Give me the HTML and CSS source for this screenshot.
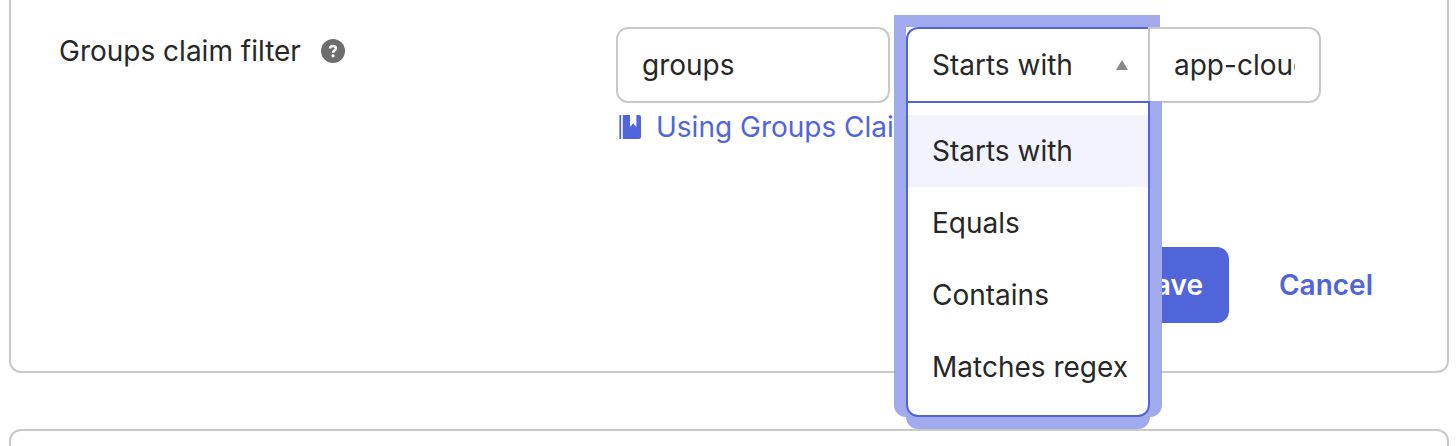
FILE: index.html
```html
<!DOCTYPE html>
<html lang="en">
<head>
  <meta charset="UTF-8" />
  <meta name="viewport" content="width=device-width, initial-scale=1.0" />
  <title>Groups claim filter</title>
  <link rel="stylesheet" href="styles.css">
</head>
<body>
  <form class="card card-main">
    <div class="form-row">
      <div class="row-label">
        <label for="claimName">Groups claim filter</label>
        <svg class="help-icon" viewBox="0 0 24 24" role="img" aria-label="Help">
          <circle cx="12" cy="12" r="12" fill="#6e6e6e" />
          <path d="M9.1 9.4C9.1 7.9 10.3 7.1 12 7.1s2.9.8 2.9 2.3c0 2-2.9 2-2.9 4.3" fill="none" stroke="#fff" stroke-width="2.5" />
          <circle cx="12" cy="16.8" r="1.6" fill="#fff" />
        </svg>
      </div>

      <div>
        <div class="fields">
          <input type="text" id="claimName" class="text-box claim-name" value="groups" />

          <div class="filter-group">
            <div class="filter-select">
              <select id="filterType" aria-label="Filter type">
                <option>Starts with</option>
                <option>Equals</option>
                <option>Contains</option>
                <option>Matches regex</option>
              </select>
              <svg class="arrow" viewBox="0 0 12 10" aria-hidden="true">
                <path d="M6 0l6 10H0z" fill="#888" />
              </svg>
              <ul class="menu" role="listbox" aria-label="Filter type">
                <li class="active" role="option" aria-selected="true">Starts with</li>
                <li role="option">Equals</li>
                <li role="option">Contains</li>
                <li role="option">Matches regex</li>
              </ul>
            </div>
            <input type="text" class="text-box filter-value" aria-label="Filter value" value="app-cloud" />
          </div>
        </div>

        <a class="doc-link" href="#">
          <svg class="book-icon" viewBox="0 0 22 24" aria-hidden="true">
            <path d="M.4 0h1.8v24H.4zM3.8 0H11v12l3.2-3.8 3.2 3.8V0H20a2 2 0 0 1 2 2v20a2 2 0 0 1-2 2H3.8z" fill="#5065da" />
          </svg>
          Using Groups Claim
        </a>
      </div>
    </div>

    <div class="actions">
      <button type="submit" class="btn btn-primary">Save</button>
      <button type="button" class="btn">Cancel</button>
    </div>
  </form>

  <section class="card card-next"></section>
</body>
</html>
```
FILE: styles.css
```css
* {
  box-sizing: border-box;
}

body {
  display: flex;
  flex-direction: column;
  height: 100vh;
  margin: 0;
  padding: 0 7px 0 9px;
  overflow: hidden;
  background-color: #fff;
  color: #272727;
  font-family: Inter, "Liberation Sans", sans-serif;
  font-size: 28px;
  line-height: 48px;
}

input,
select,
button {
  font: inherit;
  color: inherit;
}

.card {
  border: 2px solid #c9c9c9;
}

.card-main {
  border-top: none;
  border-radius: 0 0 12px 12px;
  padding: 27px 48px 48px;
}

.card-next {
  flex: 1;
  margin-top: 56px;
  border-bottom: none;
  border-radius: 12px 12px 0 0;
}

.form-row {
  display: grid;
  grid-template-columns: 557px 1fr;
}

.row-label {
  display: flex;
  align-items: center;
  gap: 20px;
  height: 48px;
}

.help-icon {
  width: 24px;
  height: 24px;
}

.fields {
  display: flex;
  gap: 16px;
}

.text-box {
  height: 76px;
  padding: 0 24px;
  border: 2px solid #c9c9c9;
  border-radius: 12px;
  background-color: #fff;
}

.claim-name {
  width: 274px;
}

.filter-group {
  display: flex;
}

.filter-select {
  position: relative;
  width: 242px;
  height: 76px;
  background-color: #fff;
  box-shadow: 0 0 0 12px #a1aaec;
}

.filter-select select {
  width: 100%;
  height: 100%;
  padding: 0 24px;
  border: 2px solid #5065da;
  border-right: none;
  border-radius: 12px 0 0 0;
  background-color: #fff;
  appearance: none;
  outline: none;
}

.arrow {
  position: absolute;
  top: 33px;
  right: 20px;
  width: 12px;
  height: 10px;
}

.menu {
  position: absolute;
  z-index: 2;
  top: 74px;
  left: 0;
  right: -2px;
  margin: 0;
  padding: 12px 0;
  list-style: none;
  border: 2px solid #5065da;
  border-radius: 0 0 12px 12px;
  background-color: #fff;
  box-shadow: -12px 0 #a1aaec, 12px 0 #a1aaec, 0 12px #a1aaec;
}

.menu li {
  padding: 0 24px;
  line-height: 72px;
  white-space: nowrap;
}

.menu .active {
  background-color: #f3f3fd;
}

.filter-value {
  position: relative;
  z-index: 1;
  width: 173px;
  border-radius: 0 12px 12px 0;
}

.doc-link {
  display: flex;
  align-items: center;
  gap: 15px;
  width: 274px;
  padding-left: 3px;
  color: #5065da;
  text-decoration: none;
  white-space: nowrap;
}

.book-icon {
  flex: none;
  width: 22px;
  height: 24px;
}

.actions {
  display: flex;
  justify-content: flex-end;
  gap: 24px;
  margin-top: 96px;
}

.btn {
  height: 76px;
  padding: 0 24px;
  border: 2px solid transparent;
  border-radius: 12px;
  background-color: transparent;
  color: #5065da;
  font-weight: 600;
  cursor: pointer;
}

.btn-primary {
  border-color: #5065da;
  background-color: #5065da;
  color: #fff;
}
```
